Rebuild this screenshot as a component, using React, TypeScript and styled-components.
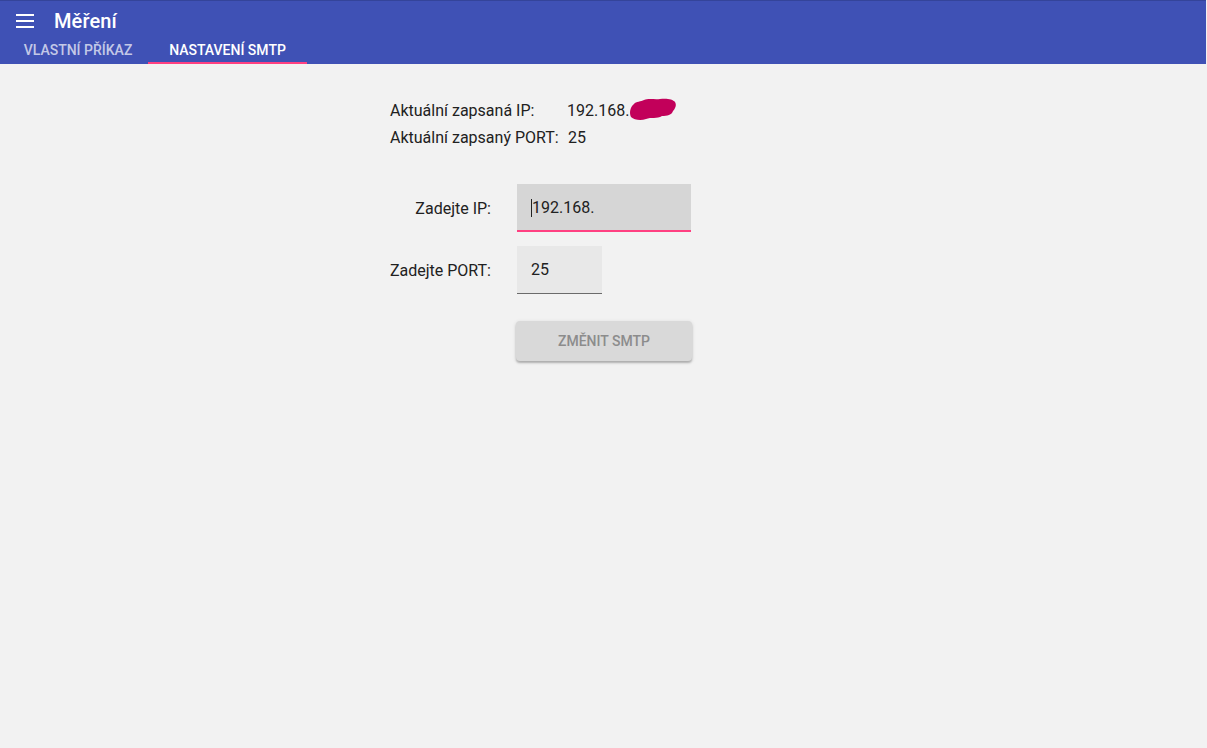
import React from "react";
import styled, { createGlobalStyle } from "styled-components";

const Global = createGlobalStyle`
  html, body { margin: 0; padding: 0; background: #f2f2f2; }
  body { font-family: Roboto, "Noto Sans", Arial, sans-serif; }
`;

const Page = styled.div`
  min-height: 748px;
  background: #f2f2f2;
`;

const Header = styled.header`
  background: #3f51b5;
  border-top: 1px solid #34449a;
  height: 64px;
  box-sizing: border-box;
  display: flex;
  flex-direction: column;
  margin-right: 1px;
`;

const TopRow = styled.div`
  display: flex;
  align-items: center;
  height: 40px;
  padding-left: 16px;
`;

const Menu = styled.button`
  background: none;
  border: 0;
  padding: 0;
  width: 18px;
  height: 14px;
  display: flex;
  flex-direction: column;
  justify-content: space-between;
  margin-right: 20px;
  span {
    display: block;
    height: 2px;
    background: #fff;
  }
`;

const Title = styled.h1`
  margin: 0;
  color: #fff;
  font-size: 20px;
  font-weight: 500;
  letter-spacing: 0.1px;
`;

const Tabs = styled.nav`
  display: flex;
  height: 23px;
  padding-left: 8px;
`;

const Tab = styled.div<{ $active?: boolean; $w: number }>`
  width: ${(p) => p.$w}px;
  box-sizing: border-box;
  display: flex;
  justify-content: center;
  align-items: flex-start;
  padding-top: 1px;
  font-size: 14px;
  font-weight: 500;
  white-space: nowrap;
  color: ${(p) => (p.$active ? "#fff" : "rgba(255,255,255,0.7)")};
  border-bottom: 2px solid ${(p) => (p.$active ? "#ff4081" : "transparent")};
  line-height: 16px;
`;

const Content = styled.main`
  display: flex;
  flex-direction: column;
  padding-left: 390px;
  padding-top: 33px;
  color: #212121;
  font-size: 16px;
`;

const InfoRow = styled.div`
  display: flex;
  height: 27px;
  align-items: center;
  white-space: nowrap;
`;

const InfoLabel = styled.span<{ $w: number }>`
  width: ${(p) => p.$w}px;
`;

const IpValue = styled.span`
  display: inline-flex;
  align-items: center;
`;

const Blob = styled.svg`
  margin-left: 0px;
  margin-top: -3px;
`;

const Form = styled.div`
  display: grid;
  grid-template-columns: 127px auto;
  row-gap: 14px;
  margin-top: 33px;
  align-items: center;
`;

const FieldLabel = styled.label`
  justify-self: end;
  margin-right: 26px;
  white-space: nowrap;
`;

const Input = styled.div<{ $w: number; $focused?: boolean }>`
  width: ${(p) => p.$w}px;
  height: 48px;
  box-sizing: border-box;
  background: ${(p) => (p.$focused ? "#d6d6d6" : "#e8e8e8")};
  border-bottom: ${(p) => (p.$focused ? "2px solid #ff4081" : "1px solid #6b6b6b")};
  display: flex;
  align-items: center;
  padding-left: 14px;
  padding-top: ${(p) => (p.$focused ? "1px" : "0")};
  font-size: 16px;
  color: #212121;
`;

const Caret = styled.span`
  display: inline-block;
  width: 1px;
  height: 18px;
  background: #222;
`;

const ButtonRow = styled.div`
  grid-column: 2;
  margin-top: 13px;
  margin-left: -1px;
`;

const Button = styled.button`
  width: 176px;
  height: 40px;
  border: 0;
  border-radius: 4px;
  background: #d9d9d9;
  color: #8c8c8c;
  font-family: Roboto, sans-serif;
  font-size: 14px;
  font-weight: 500;
  box-shadow: 0 2px 2px rgba(0,0,0,0.22), 0 1px 4px rgba(0,0,0,0.12);
  padding: 0;
`;

export default function App() {
  return (
    <Page>
      <Global />
      <Header>
        <TopRow>
          <Menu aria-label="menu">
            <span />
            <span />
            <span />
          </Menu>
          <Title>Měření</Title>
        </TopRow>
        <Tabs>
          <Tab $w={140}>VLASTNÍ PŘÍKAZ</Tab>
          <Tab $w={159} $active>NASTAVENÍ SMTP</Tab>
        </Tabs>
      </Header>
      <Content>
        <InfoRow>
          <InfoLabel $w={177}>Aktuální zapsaná IP:</InfoLabel>
          <IpValue>
            192.168.
            <Blob width="48" height="23" viewBox="0 0 48 23">
              <path
                d="M5 6 C7 3 12 4 15 2 C20 0 26 2 31 1 C37 0 44 1 46 4 C48 7 46 11 44 13 C43 17 38 18 33 18 C28 21 22 19 17 21 C12 23 5 22 2 19 C0 15 1 9 5 6 Z"
                fill="#c2005a"
              />
            </Blob>
          </IpValue>
        </InfoRow>
        <InfoRow>
          <InfoLabel $w={178}>Aktuální zapsaný PORT:</InfoLabel>
          <span>25</span>
        </InfoRow>
        <Form>
          <FieldLabel>Zadejte IP:</FieldLabel>
          <Input $w={174} $focused>
            <Caret />
            192.168.
          </Input>
          <FieldLabel>Zadejte PORT:</FieldLabel>
          <Input $w={85}>25</Input>
          <ButtonRow>
            <Button>ZMĚNIT SMTP</Button>
          </ButtonRow>
        </Form>
      </Content>
    </Page>
  );
}
